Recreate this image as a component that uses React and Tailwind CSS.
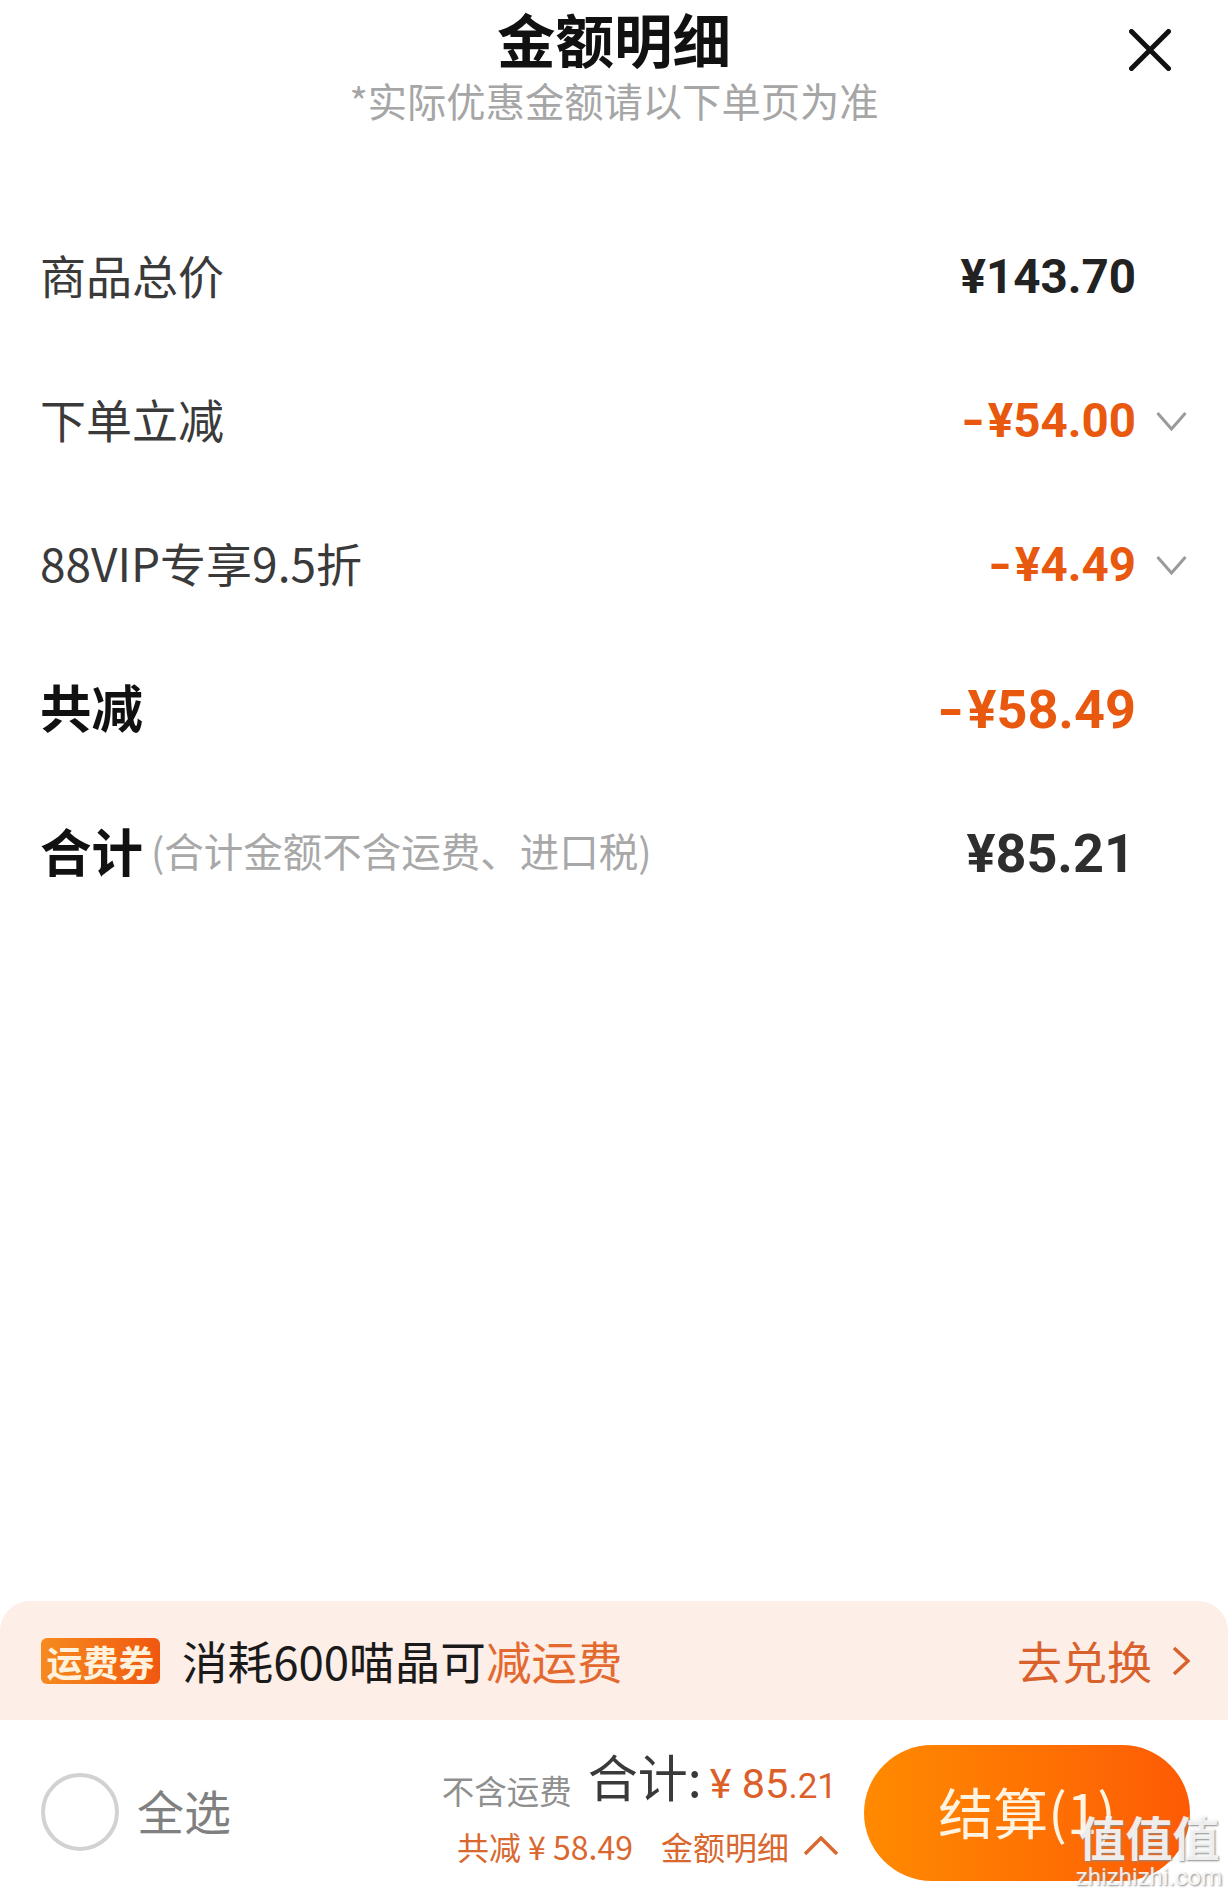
import React from "react";

const cjk = "font-['Noto_Sans_CJK_SC','Noto_Sans',sans-serif]";
const num = "font-['Roboto','Noto_Sans_CJK_SC',sans-serif] font-bold";

function Down() {
  return (
    <svg width="31" height="20" viewBox="0 0 31 20" fill="none" stroke="#9a9a9a" strokeWidth="3" strokeLinejoin="miter">
      <path d="M1.5 2 L15.5 18 L29.5 2" />
    </svg>
  );
}

function Minus() {
  return <span className="inline-block w-[0.57em] origin-left scale-x-[1.3]">-</span>;
}

function Row({ label, value, color = "text-[#222222]", chevron, size = "text-[47.5px]" }) {
  return (
    <div className="flex h-[144px] items-center pl-[40px] pr-[41px]">
      <div className="relative top-[-1px] flex-1 leading-none">{label}</div>
      <div className={`${num} ${size} ${color} relative top-[3px] leading-none`}>{value}</div>
      <div className="relative top-[2px] ml-[20px] flex w-[31px] justify-center">{chevron ? <Down /> : null}</div>
    </div>
  );
}

export default function App() {
  return (
    <div className={`${cjk} relative flex h-[1897px] w-[1228px] flex-col overflow-hidden bg-white`}>
      <header className="relative h-[203px] shrink-0 text-center">
        <div className="pt-[4px] text-[58.5px] font-bold leading-[68px] text-[#111111]">金额明细</div>
        <div className="mt-[4px] text-[39.3px] leading-[48px] text-[#a6a6a6]">*实际优惠金额请以下单页为准</div>
        <svg className="absolute left-[1129px] top-[29px]" width="42" height="42" viewBox="0 0 42 42" fill="none" stroke="#111111" strokeWidth="5" strokeLinecap="round">
          <path d="M2.5 2.5 L39.5 39.5 M39.5 2.5 L2.5 39.5" />
        </svg>
      </header>

      <Row label={<span className="text-[46px] text-[#3a3a3a]">商品总价</span>} value="¥143.70" />
      <Row label={<span className="text-[46px] text-[#3a3a3a]">下单立减</span>} value={<><Minus />¥54.00</>} color="text-[#e8590f]" chevron />
      <Row label={<span className="text-[46px] text-[#3a3a3a]">88VIP专享9.5折</span>} value={<><Minus />¥4.49</>} color="text-[#e8590f]" chevron />
      <Row label={<span className="text-[51.5px] font-bold text-[#111111]">共减</span>} value={<><Minus />¥58.49</>} color="text-[#e8590f]" size="text-[54px]" />
      <Row
        label={
          <span className="flex items-center">
            <span className="text-[51.5px] font-bold text-[#111111]">合计</span>
            <span className="ml-[8px] text-[39.5px] text-[#a8a8a8]">(合计金额不含运费、进口税)</span>
          </span>
        }
        value={<span className="mr-[1px] text-[#2e2e2e]">¥85.21</span>}
        size="text-[54px]"
      />

      <div className="flex-1" />

      <div className="flex h-[119px] shrink-0 items-center rounded-t-[30px] bg-[#fdeee8] pl-[41px] pr-[38px]">
        <div className="flex h-[46px] w-[119px] items-center justify-center rounded-[6px] bg-gradient-to-r from-[#f58a1f] to-[#f0570f] text-[36px] font-bold leading-none text-[#fff2dd]">
          运费券
        </div>
        <div className="ml-[22px] flex-1 text-[45.6px] leading-none text-[#1a1a1a]">
          消耗600喵晶可<span className="text-[#e4692f]">减运费</span>
        </div>
        <div className="text-[45px] leading-none text-[#d9612b]">去兑换</div>
        <svg className="ml-[20px]" width="18" height="30" viewBox="0 0 18 30" fill="none" stroke="#d9612b" strokeWidth="3.5">
          <path d="M2 2 L16 15 L2 28" />
        </svg>
      </div>

      <div className="flex h-[177px] shrink-0 items-center pl-[41px] pr-[38px]">
        <div className="mt-[6px] h-[78px] w-[78px] shrink-0 rounded-full border-[4px] border-[#d2d2d2]" />
        <div className="ml-[18px] mt-[2px] text-[47px] leading-none text-[#808080]">全选</div>

        <div className="ml-auto mr-[27px] flex flex-col items-end">
          <div className="flex items-baseline">
            <span className="-translate-y-[1px] text-[32.5px] text-[#8f8f8f]">不含运费</span>
            <span className="ml-[16px] -translate-y-[8px] text-[50px] leading-[56px] text-[#3a3a3a]">合计:</span>
            <span className="ml-[8px] -translate-y-[7px] font-['Roboto','Noto_Sans_CJK_SC',sans-serif] text-[41.5px] text-[#dc5f2a]">
              ¥ 85<span className="text-[35px]">.21</span>
            </span>
          </div>
          <div className="mt-[8px] flex items-center text-[32px] leading-none text-[#d9682f]">
            <span>共减 ¥ 58.49</span>
            <span className="ml-[28px]">金额明细</span>
            <svg className="ml-[14px] mr-[-2px]" width="36" height="20" viewBox="0 0 36 20" fill="none" stroke="#d9682f" strokeWidth="3.5">
              <path d="M2 18 L18 2 L34 18" />
            </svg>
          </div>
        </div>

        <div className="mt-[8px] flex h-[136px] w-[326px] shrink-0 items-center justify-center rounded-[68px] bg-gradient-to-r from-[#ff8a00] to-[#fd5a05] pb-[4px] text-[55px] leading-none text-[#fff3e2]">
          结算(1)
        </div>
      </div>

      <div className="absolute left-[1076px] top-[1808px] flex w-[146px] flex-col items-center leading-none text-white/85 [text-shadow:1px_1px_2px_#8a8a8a]">
        <span className="text-[47px] font-bold leading-[56px]">值值值</span>
        <span className="mt-[3px] whitespace-nowrap font-['Roboto',sans-serif] text-[24px] leading-[20px]">zhizhizhi.com</span>
      </div>
    </div>
  );
}
